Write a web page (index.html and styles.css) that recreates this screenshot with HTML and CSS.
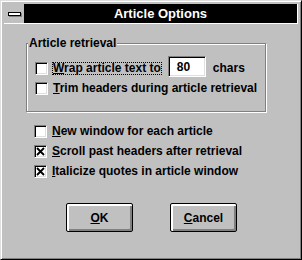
FILE: index.html
```html
<!DOCTYPE html>
<html>
<head>
<meta charset="utf-8">
<link rel="stylesheet" href="styles.css">
</head>
<body>
<div class="window">
  <div class="titlebar">
    <div class="sysmenu"><span class="sysbar"></span></div>
    <div class="caption">Article Options</div>
  </div>
  <div class="client">
    <fieldset class="group">
      <legend>Article retrieval</legend>
      <div class="row">
        <span class="check"></span>
        <span class="label focus"><u>W</u>rap article text to</span>
        <span class="edit">80</span>
        <span class="label chars">chars</span>
      </div>
      <div class="row">
        <span class="check"></span>
        <span class="label"><u>T</u>rim headers during article retrieval</span>
      </div>
    </fieldset>
    <div class="options">
      <div class="row">
        <span class="check"></span>
        <span class="label"><u>N</u>ew window for each article</span>
      </div>
      <div class="row">
        <span class="check"><svg width="11" height="11" viewBox="0 0 11 11"><path d="M2 2L9 9M9 2L2 9" stroke="#000" stroke-width="1.8"/></svg></span>
        <span class="label"><u>S</u>croll past headers after retrieval</span>
      </div>
      <div class="row">
        <span class="check"><svg width="11" height="11" viewBox="0 0 11 11"><path d="M2 2L9 9M9 2L2 9" stroke="#000" stroke-width="1.8"/></svg></span>
        <span class="label"><u>I</u>talicize quotes in article window</span>
      </div>
    </div>
    <div class="buttons">
      <button class="btn"><u>O</u>K</button>
      <button class="btn"><u>C</u>ancel</button>
    </div>
  </div>
</div>
</body>
</html>
```
FILE: styles.css
```css
* { box-sizing: border-box; }
body {
  margin: 0;
  background: #c0c0c0;
  font-family: "Liberation Sans", Arial, sans-serif;
  font-weight: bold;
  font-size: 12px;
  color: #000;
}
u { text-underline-offset: 1px; }
.window {
  width: 302px;
  height: 260px;
  border: 1px solid;
  border-color: #dfdfdf #000 #000 #dfdfdf;
  box-shadow: inset 1px 1px #fff, inset -1px -1px #808080;
  padding: 3px;
  display: flex;
  flex-direction: column;
  background: #c0c0c0;
}
.titlebar {
  display: flex;
  height: 20px;
  border-right: 1px solid #fff;
  border-bottom: 1px solid #fff;
  flex: none;
}
.sysmenu {
  width: 20px;
  display: flex;
  align-items: center;
  padding-left: 4px;
  background: #c0c0c0;
}
.sysbar {
  width: 13px;
  height: 4px;
  border: 1px solid #000;
  background: #fff;
  box-shadow: 1px 1px #808080;
}
.caption {
  flex: 1;
  background: #000;
  color: #fff;
  font-size: 13px;
  display: flex;
  align-items: center;
  justify-content: center;
}
.client {
  flex: 1;
  display: flex;
  flex-direction: column;
}
.group {
  margin: 12px 0 0 22px;
  width: 240px;
  border: 1px solid #808080;
  box-shadow: inset 1px 1px #fff, 1px 1px #fff;
  padding: 8px 0 13px 8px;
  min-width: 0;
}
.group legend {
  padding: 0 1px;
  margin-left: -7px;
  line-height: 14px;
  background: #c0c0c0;
}
.row {
  display: flex;
  align-items: center;
  height: 20px;
  white-space: nowrap;
}
.check {
  width: 13px;
  height: 13px;
  flex: none;
  background: #fff;
  border: 1px solid;
  border-color: #808080 #fff #fff #808080;
  box-shadow: inset 1px 1px #000, inset -1px -1px #dfdfdf;
  margin-right: 4px;
  display: flex;
  align-items: center;
  justify-content: center;
}
.check svg { display: block; }
.label {
  padding: 0 1px;
  line-height: 13px;
}
.focus {
  border: 1px dotted #000;
  padding: 0;
  line-height: 11px;
}
.edit {
  width: 38px;
  height: 21px;
  margin-left: 6px;
  margin-top: -3px;
  background: #fff;
  border: 1px solid;
  border-color: #808080 #fff #fff #808080;
  box-shadow: inset 1px 1px #000, inset -1px -1px #dfdfdf;
  padding-left: 8px;
  display: flex;
  align-items: center;
}
.chars { margin-left: 6px; }
.options {
  margin: 9px 0 0 30px;
}
.buttons {
  display: flex;
  gap: 37px;
  margin: 22px 0 0 62px;
}
.btn {
  width: 67px;
  height: 29px;
  border: 1px solid #000;
  border-radius: 2px;
  background: #c0c0c0;
  box-shadow: inset 2px 2px #fff, inset -2px -2px #808080;
  font: inherit;
  color: #000;
  padding: 0;
}
```
